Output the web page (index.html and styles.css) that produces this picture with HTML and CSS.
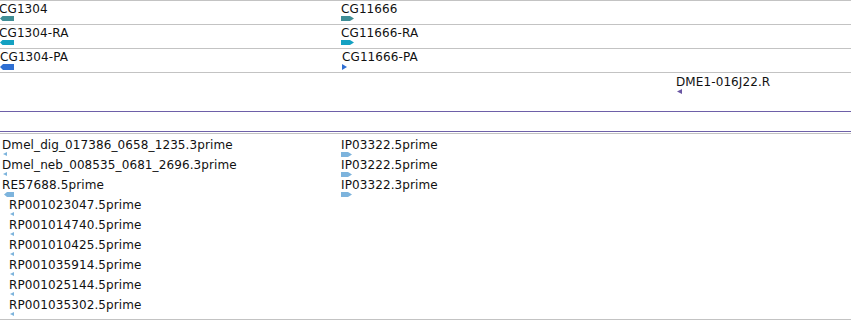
FILE: index.html
```html
<!DOCTYPE html>
<html lang="en">
<head>
    <meta charset="UTF-8">
    <title>Track View</title>
    <link rel="stylesheet" href="styles.css">
</head>
<body>
    <div class="panel">
        <!-- Gene track -->
        <div class="track track-gene">
            <div class="feature" style="left: 0px">
                <span class="label shift-1">CG1304</span>
                <svg class="glyph" width="14" height="5"><polygon class="gene" points="0,2.5 2.5,0 14,0 14,5 2.5,5"/></svg>
            </div>
            <div class="feature" style="left: 341px">
                <span class="label">CG11666</span>
                <svg class="glyph" width="13" height="5"><polygon class="gene" points="0,0 9,0 13,2.5 9,5 0,5"/></svg>
            </div>
        </div>

        <!-- Transcript track -->
        <div class="track track-gene">
            <div class="feature" style="left: 0px">
                <span class="label shift-1">CG1304-RA</span>
                <svg class="glyph" width="14" height="5"><polygon class="transcript" points="0,2.5 2.5,0 14,0 14,5 2.5,5"/></svg>
            </div>
            <div class="feature" style="left: 341px">
                <span class="label">CG11666-RA</span>
                <svg class="glyph" width="13" height="5"><polygon class="transcript" points="0,0 9,0 13,2.5 9,5 0,5"/></svg>
            </div>
        </div>

        <!-- Protein track -->
        <div class="track track-gene">
            <div class="feature" style="left: 0px">
                <span class="label">CG1304-PA</span>
                <svg class="glyph" width="14" height="6"><polygon class="protein" points="0,3 3,0 14,0 14,6 3,6"/></svg>
            </div>
            <div class="feature" style="left: 342px">
                <span class="label">CG11666-PA</span>
                <svg class="glyph" width="5" height="6"><polygon class="protein" points="0,0 5,3 0,6"/></svg>
            </div>
        </div>

        <!-- BAC end track -->
        <div class="track track-bac">
            <div class="feature" style="left: 676px">
                <span class="label">DME1-016J22.R</span>
                <svg class="glyph nudge-1" width="5" height="5"><polygon class="bac" points="5,0 0,2.5 5,5"/></svg>
            </div>
        </div>

        <!-- Empty selected track -->
        <div class="track track-empty"></div>

        <!-- EST track -->
        <div class="track track-est">
            <div class="est-row">
                <div class="feature" style="left: 2px">
                    <span class="label">Dmel_dig_017386_0658_1235.3prime</span>
                    <svg class="glyph nudge-1" width="4" height="4"><polygon class="est" points="4,0 0,2 4,4"/></svg>
                </div>
                <div class="feature" style="left: 341px">
                    <span class="label">IP03322.5prime</span>
                    <svg class="glyph" width="11" height="5"><polygon class="est" points="0,0 7,0 11,2.5 7,5 0,5"/></svg>
                </div>
            </div>
            <div class="est-row">
                <div class="feature" style="left: 2px">
                    <span class="label">Dmel_neb_008535_0681_2696.3prime</span>
                    <svg class="glyph nudge-1" width="4" height="4"><polygon class="est" points="4,0 0,2 4,4"/></svg>
                </div>
                <div class="feature" style="left: 341px">
                    <span class="label">IP03222.5prime</span>
                    <svg class="glyph" width="11" height="5"><polygon class="est" points="0,0 7,0 11,2.5 7,5 0,5"/></svg>
                </div>
            </div>
            <div class="est-row">
                <div class="feature" style="left: 2px">
                    <span class="label">RE57688.5prime</span>
                    <svg class="glyph nudge-2" width="10" height="5"><polygon class="est" points="0,2.5 3,0 10,0 10,5 3,5"/></svg>
                </div>
                <div class="feature" style="left: 341px">
                    <span class="label">IP03322.3prime</span>
                    <svg class="glyph" width="11" height="5"><polygon class="est" points="0,0 7,0 11,2.5 7,5 0,5"/></svg>
                </div>
            </div>
            <div class="est-row">
                <div class="feature" style="left: 9px">
                    <span class="label">RP001023047.5prime</span>
                    <svg class="glyph nudge-1" width="4" height="4"><polygon class="est" points="4,0 0,2 4,4"/></svg>
                </div>
            </div>
            <div class="est-row">
                <div class="feature" style="left: 9px">
                    <span class="label">RP001014740.5prime</span>
                    <svg class="glyph nudge-1" width="4" height="4"><polygon class="est" points="4,0 0,2 4,4"/></svg>
                </div>
            </div>
            <div class="est-row">
                <div class="feature" style="left: 9px">
                    <span class="label">RP001010425.5prime</span>
                    <svg class="glyph nudge-1" width="4" height="4"><polygon class="est" points="4,0 0,2 4,4"/></svg>
                </div>
            </div>
            <div class="est-row">
                <div class="feature" style="left: 9px">
                    <span class="label">RP001035914.5prime</span>
                    <svg class="glyph nudge-1" width="4" height="4"><polygon class="est" points="4,0 0,2 4,4"/></svg>
                </div>
            </div>
            <div class="est-row">
                <div class="feature" style="left: 9px">
                    <span class="label">RP001025144.5prime</span>
                    <svg class="glyph nudge-1" width="4" height="4"><polygon class="est" points="4,0 0,2 4,4"/></svg>
                </div>
            </div>
            <div class="est-row">
                <div class="feature" style="left: 9px">
                    <span class="label">RP001035302.5prime</span>
                    <svg class="glyph nudge-1" width="4" height="4"><polygon class="est" points="4,0 0,2 4,4"/></svg>
                </div>
            </div>
        </div>
    </div>
</body>
</html>
```

FILE: styles.css
```css
:root {
    --track-line: #c3c3c3;
    --select-line: #6e60a8;
    --gene: #3f8e96;
    --transcript: #14a1c2;
    --protein: #2f6fd3;
    --est: #7db4dd;
    --bac: #6a56a3;
}

* {
    margin: 0;
    padding: 0;
    box-sizing: border-box;
}

body {
    background: white;
    width: 851px;
    height: 320px;
    overflow: hidden;
    font-family: 'DejaVu Sans', 'Liberation Sans', sans-serif;
}

.panel {
    width: 851px;
}

/* Tracks */
.track {
    position: relative;
    border-top: 1px solid var(--track-line);
    overflow: hidden;
}

.track-gene {
    height: 24px;
}

.track-gene .feature {
    top: 1px;
}

.track-bac {
    height: 39px;
}

.track-bac .feature {
    top: 2px;
}

.track-empty {
    height: 21px;
    border-top: 1px solid var(--select-line);
    border-bottom: 1px solid var(--select-line);
    margin-bottom: 1px;
}

.track-est {
    height: 187px;
    padding-top: 4px;
    border-bottom: 1px solid var(--track-line);
}

.est-row {
    position: relative;
    height: 20px;
}

/* Features */
.feature {
    position: absolute;
    top: 0;
    display: flex;
    flex-direction: column;
    align-items: flex-start;
}

.label {
    font-size: 12px;
    line-height: 14px;
    letter-spacing: 0.1px;
    color: #111;
    white-space: nowrap;
}

.shift-1 {
    margin-left: -1px;
}

.glyph {
    display: block;
}

.nudge-1 {
    margin-left: 1px;
}

.nudge-2 {
    margin-left: 2px;
}

.gene { fill: var(--gene); }
.transcript { fill: var(--transcript); }
.protein { fill: var(--protein); }
.est { fill: var(--est); }
.bac { fill: var(--bac); }
```
